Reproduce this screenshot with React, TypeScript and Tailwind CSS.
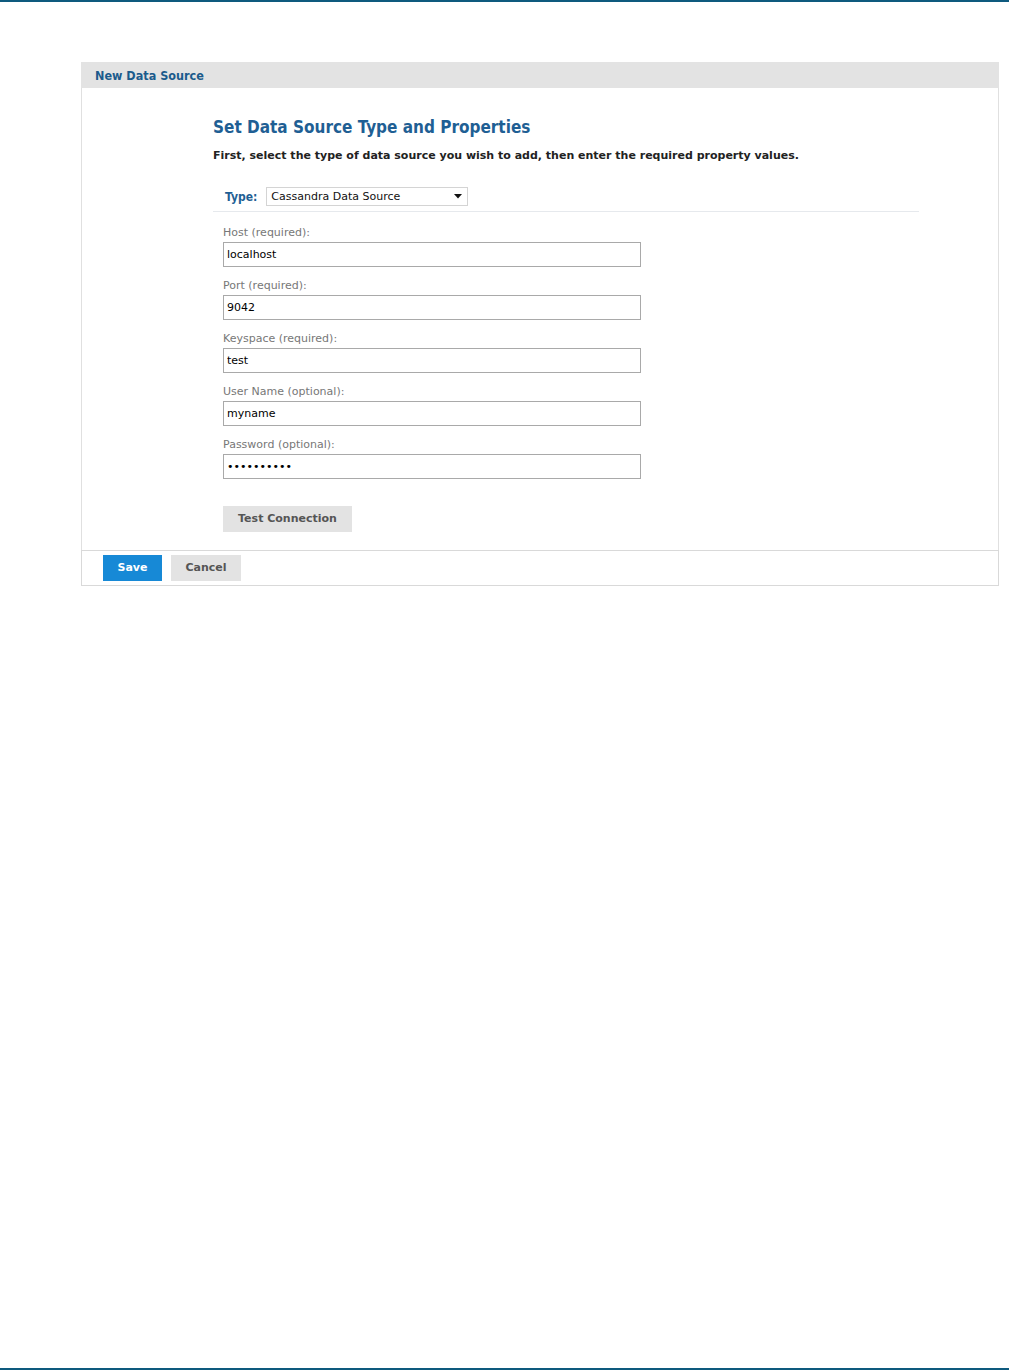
import { useState } from 'react';

const font = { fontFamily: '"DejaVu Sans", Verdana, sans-serif' };
const condensed = { fontFamily: '"DejaVu Sans Condensed", "DejaVu Sans", Verdana, sans-serif' };

const fields = [
  { label: 'Host (required):', value: 'localhost', type: 'text' },
  { label: 'Port (required):', value: '9042', type: 'text' },
  { label: 'Keyspace (required):', value: 'test', type: 'text' },
  { label: 'User Name (optional):', value: 'myname', type: 'text' },
  { label: 'Password (optional):', value: 'mypassword', type: 'password' },
];

export default function App() {
  const [values, setValues] = useState(fields.map(f => f.value));

  return (
    <div className="min-h-[1370px] bg-white flex flex-col" style={font}>
      <div className="h-[2px] bg-[#0e5a7e]" />

      <div className="ml-[81px] mt-[60px] w-[918px]">
        {/* Header */}
        <div className="h-[26px] bg-[#e3e3e3] flex items-center pl-[14px] pt-[2px]">
          <span className="text-[12.5px] font-bold text-[#1b5b8c]" style={condensed}>New Data Source</span>
        </div>

        {/* Body */}
        <div className="border-x border-[#e0e0e0] pl-[131px] pt-[29px] pb-[18px]">
          <h1 className="text-[17px] leading-[20px] font-bold text-[#1f5f94]" style={condensed}>
            Set Data Source Type and Properties
          </h1>
          <p className="mt-[12px] text-[11px] leading-[14px] font-bold text-[#222]">
            First, select the type of data source you wish to add, then enter the required property values.
          </p>

          <div className="mt-[24px] flex items-center pl-[12px] h-[19px]">
            <span className="text-[12px] font-bold text-[#1f5f94] mr-[9px]" style={condensed}>Type:</span>
            <div className="w-[202px] h-[19px] border border-[#d4d4d4] flex items-center justify-between pl-[4px] pr-[5px]">
              <span className="text-[11px] text-[#111] pt-[2px]">Cassandra Data Source</span>
              <svg width="8" height="5" viewBox="0 0 8 5"><path d="M0 0h8L4 4.5z" fill="#111" /></svg>
            </div>
          </div>

          <div className="mt-[5px] w-[706px] h-px bg-[#e6e9ed]" />

          <div className="pl-[10px] pt-[13px]">
            {fields.map((f, i) => (
              <div key={f.label} className="mb-[11px]">
                <div className="text-[11px] leading-[14px] text-[#777] pt-[1px] mb-[2px]">{f.label}</div>
                <input
                  type={f.type}
                  value={values[i]}
                  onChange={e => setValues(v => v.map((x, j) => (j === i ? e.target.value : x)))}
                  className="block w-[418px] h-[25px] border border-[#a9a9a9] px-[3px] text-[11px] text-black outline-none"
                  style={font}
                />
              </div>
            ))}

            <button className="block mt-[27px] h-[26px] w-[129px] bg-[#e3e3e3] text-[11px] font-bold text-[#555]">
              Test Connection
            </button>
          </div>
        </div>

        {/* Footer */}
        <div className="border border-[#d9d9d9] h-[36px] flex items-center pl-[21px] gap-[9px]">
          <button className="h-[26px] w-[59px] bg-[#1789d6] text-[11px] font-bold text-white">Save</button>
          <button className="h-[26px] w-[70px] bg-[#e3e3e3] text-[11px] font-bold text-[#555]">Cancel</button>
        </div>
      </div>

      <div className="flex-1" />
      <div className="h-[2px] bg-[#0e5a7e]" />
    </div>
  );
}
